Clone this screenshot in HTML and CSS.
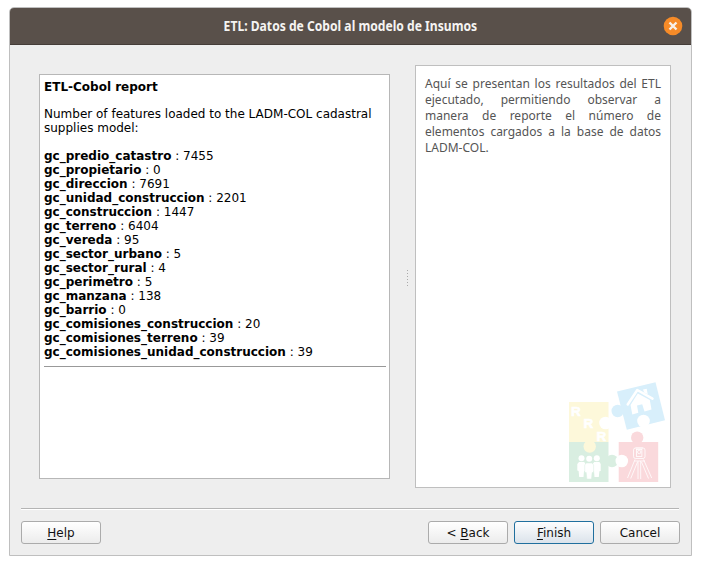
FILE: index.html
```html
<!DOCTYPE html>
<html lang="es">
<head>
<meta charset="utf-8">
<title>ETL: Datos de Cobol al modelo de Insumos</title>
<link rel="stylesheet" href="styles.css">
</head>
<body>
<div class="window">
  <header class="titlebar">
    <span class="side"></span>
    <h1 class="title">ETL: Datos de Cobol al modelo de Insumos</h1>
    <span class="side">
      <svg class="close" viewBox="0 0 20 20"><circle cx="10" cy="10" r="9.3" fill="#f68b28"/><path d="M6.500 6.500l7 7M13.500 6.500l-7 7" stroke="#f8f1ea" stroke-width="2.400"/></svg>
    </span>
  </header>
  <main class="content">
    <section class="report">
      <h2>ETL-Cobol report</h2>
      <p>Number of features loaded to the LADM-COL cadastral<br>supplies model:</p>
      <ul>
        <li><b>gc_predio_catastro</b> : 7455</li>
        <li><b>gc_propietario</b> : 0</li>
        <li><b>gc_direccion</b> : 7691</li>
        <li><b>gc_unidad_construccion</b> : 2201</li>
        <li><b>gc_construccion</b> : 1447</li>
        <li><b>gc_terreno</b> : 6404</li>
        <li><b>gc_vereda</b> : 95</li>
        <li><b>gc_sector_urbano</b> : 5</li>
        <li><b>gc_sector_rural</b> : 4</li>
        <li><b>gc_perimetro</b> : 5</li>
        <li><b>gc_manzana</b> : 138</li>
        <li><b>gc_barrio</b> : 0</li>
        <li><b>gc_comisiones_construccion</b> : 20</li>
        <li><b>gc_comisiones_terreno</b> : 39</li>
        <li><b>gc_comisiones_unidad_construccion</b> : 39</li>
      </ul>
      <hr>
    </section>
    <div class="splitter"><i></i><i></i><i></i><i></i><i></i><i></i></div>
    <aside class="help">
      <p>Aquí se presentan los resultados del ETL ejecutado, permitiendo observar a manera de reporte el número de elementos cargados a la base de datos LADM-COL.</p>
      <svg class="logo" viewBox="565 380 103 105">
        <path fill="#fdf8da" d="M569 402h39.500v40h-39.500z"/>
        <path fill="#d9eee1" d="M569 442h39.500v40h-39.500z"/>
        <circle cx="612" cy="461" r="6.200" fill="#d9eee1"/>
        <circle cx="589.700" cy="446.500" r="6.200" fill="#fdf8da"/>
        <circle cx="605.500" cy="423" r="6.300" fill="#fff"/>
        <path fill="#fad9dc" d="M618.700 442h39.500v40h-39.500z"/>
        <circle cx="637.200" cy="437.700" r="6.200" fill="#fad9dc"/>
        <circle cx="621.800" cy="461" r="6.300" fill="#fff"/>
        <path fill="#d8effb" d="M617 391.500l38.500-9.300 9.500 38.100-38.200 9.400z"/>
        <circle cx="617.700" cy="411" r="6.200" fill="#d8effb"/>
        <circle cx="643.500" cy="421" r="6.300" fill="#fff"/>
        <g fill="#fff" stroke="#fff" stroke-width=".6" font-family="Liberation Sans" font-weight="bold" font-size="13.500">
          <text x="571" y="415.500">R</text><text x="583.500" y="428">R</text><text x="596.500" y="440.500">R</text>
        </g>
        <path d="M627.700 404.500l9.600-14.500 15.200 8.600" fill="none" stroke="#fff" stroke-width="2.500" stroke-linecap="round" stroke-linejoin="round"/>
        <path fill="#fff" d="M643 389.500l3.700-.8 1 5.500-3.600-1.800zM630.500 405l7.300-11.500 12 6.500 1.700 9.500-7 2-2.300-7.200-5.200 1.300 1.300 7.200-6 1.700z"/>
        <g fill="#fff">
          <circle cx="581.500" cy="458.300" r="3"/><circle cx="589.200" cy="458.800" r="3"/><circle cx="596.800" cy="458.300" r="3"/>
          <path d="M579 462h5.200l1.300 2v7h-1.500l-.5 6h-4.300l-.6-6-1.300-.5V464zM594.200 462h5.200l1.300 2v7l-1.300.3-.6 5.700h-4.300l-.5-6h-1.200v-7z"/>
          <path stroke="#d9eee1" stroke-width=".5" d="M586.300 463h5.800l1.500 2v7.500h-1.500l-.6 6.500h-4.600l-.7-6.500h-1.500V465z"/>
        </g>
        <g fill="none" stroke="#fff" stroke-width=".8">
          <rect x="633.500" y="448" width="11.500" height="10.500" rx="2"/>
          <rect x="636.600" y="449.500" width="5.300" height="7"/><circle cx="639.200" cy="452" r="1.700"/>
          <path d="M635.500 448h7.500M634.500 461h10.500M635 459.500l-7.500 18.500M637.500 462l-6.800 16.500M638 461v18M640.700 461v18M643.500 459.500l8.200 18.500M641.500 462l7 16.500"/>
        </g>
      </svg>
    </aside>
  </main>
  <footer class="actions">
    <button class="btn first"><span><u>H</u>elp</span></button>
    <button class="btn"><span>&lt; <u>B</u>ack</span></button>
    <button class="btn primary"><span><u>F</u>inish</span></button>
    <button class="btn last"><span>Cancel</span></button>
  </footer>
</div>
</body>
</html>
```
FILE: styles.css
```css
* { box-sizing: border-box; }
body { margin: 0; padding: 7px 9px 9px; height: 565px; background: #fff; font: 12px/14px "DejaVu Sans", sans-serif; color: #000; overflow: hidden; }
.window { width: 683px; height: 549px; border: 1px solid #bfbfbf; border-radius: 5px 5px 0 0; background: #eee; display: flex; flex-direction: column; overflow: hidden; }
.titlebar { height: 37px; flex: none; background: #59504a; border-bottom: 1px solid #453d38; display: flex; align-items: center; justify-content: space-between; }
.side { width: 30px; display: flex; }
.close { width: 20px; height: 20px; margin-left: 2px; }
.title { margin: 0; font: bold 14px/18px "Noto Sans", sans-serif; white-space: nowrap; transform: scaleX(.866); color: #f5f4f2; }
.content { height: 463px; flex: none; display: flex; padding: 20px 20px 0 29px; }
.report { width: 351px; height: 405px; margin-top: 9px; padding: 5px 3px 0 4px; border: 1px solid #b7b7b7; background: #fff; }
.report h2 { margin: 0 0 13px; font-size: 12px; line-height: 14px; }
.report p { margin: 0 0 14px; }
.report ul { margin: 0; padding: 0; list-style: none; }
.report hr { margin: 7px 0 0; border: 0; border-top: 1px solid #999; }
.splitter { width: 25px; display: flex; flex-direction: column; align-items: center; gap: 2px; padding: 205px 0 0 10px; }
.splitter i { width: 1px; height: 1px; background: #aaa; }
.help { width: 256px; height: 423px; padding: 10px 2px 2px 9px; border: 1px solid #bfbfbf; background: #fff; display: flex; flex-direction: column; justify-content: space-between; }
.help p { margin: 0 7px 0 0; font: 12px/16px "Noto Sans", sans-serif; color: #555; text-align: justify; }
.logo { width: 103px; height: 105px; align-self: flex-end; }
.actions { margin: 0 12px 0 11px; border-top: 1px solid #b4b4b4; box-shadow: inset 0 1px #fff; display: flex; gap: 6px; padding-top: 12px; }
.btn { width: 80px; height: 23px; padding: 0; border: 1px solid #ababab; border-radius: 3px; background: linear-gradient(#fff, #ececec); font: 12px/14px "DejaVu Sans", sans-serif; color: #111; }
.btn.first { margin-right: auto; }
.btn.last { margin-right: -1px; }
.btn.primary { border-color: #206f9e; background: linear-gradient(#fdfdfe, #dbe3eb); }
.btn u { text-underline-offset: 2px; text-decoration-skip-ink: none; }
```
